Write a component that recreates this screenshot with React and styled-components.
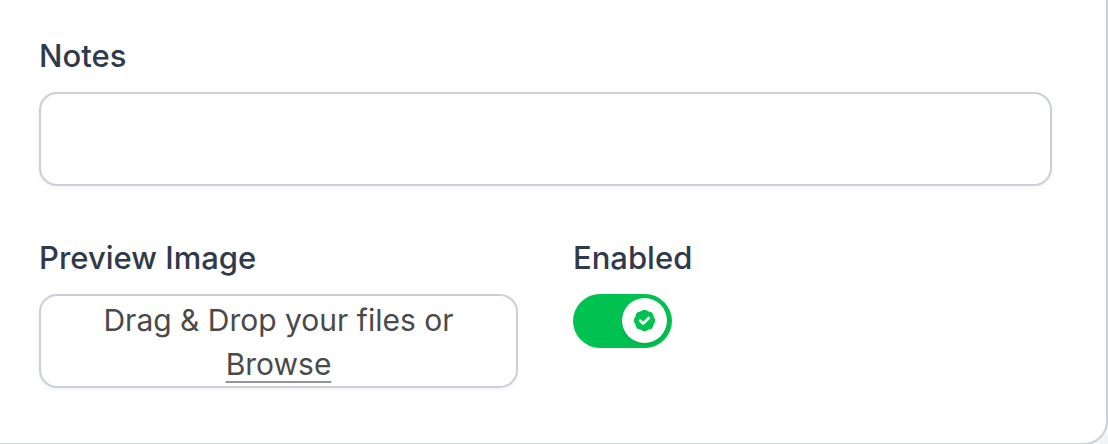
import React, { useState } from 'react'
import styled, { createGlobalStyle } from 'styled-components'

function CheckBadge()
{
    return (
        <svg width='27' height='27' viewBox='0 0 20 20' fill='currentColor' aria-hidden='true'>
            <circle cx='10' cy='10' r='7.4' />
            <path d='M16.403 12.652a3 3 0 0 0 0-5.304 3 3 0 0 0-3.75-3.751 3 3 0 0 0-5.305 0 3 3 0 0 0-3.751 3.75 3 3 0 0 0 0 5.305 3 3 0 0 0 3.75 3.751 3 3 0 0 0 5.305 0 3 3 0 0 0 3.751-3.75Z' />
            <path d='M6.8 10.2 9 12.2 13.2 8.1' fill='none' stroke='#ffffff' strokeWidth='2' strokeLinecap='round' strokeLinejoin='round' />
        </svg>
    )
}

function App()
{
    const [notes, setNotes] = useState('')
    const [enabled, setEnabled] = useState(true)

    return (
        <>
            <GlobalStyle />
            <Card>
                <Field>
                    <Label htmlFor='notes'>Notes</Label>
                    <TextArea id='notes' rows={2} value={notes} onChange={(e) => setNotes(e.target.value)} />
                </Field>
                <Columns>
                    <Field>
                        <Label htmlFor='preview'>Preview Image</Label>
                        <FileInput id='preview' type='file' accept='image/*' />
                        <DropZone htmlFor='preview'>
                            Drag &amp; Drop your files or <Browse>Browse</Browse>
                        </DropZone>
                    </Field>
                    <Field>
                        <Label htmlFor='enabled'>Enabled</Label>
                        <Toggle>
                            <Track
                                id='enabled'
                                type='checkbox'
                                role='switch'
                                checked={enabled}
                                onChange={(e) => setEnabled(e.target.checked)}
                            />
                            <Thumb $on={enabled}>
                                {enabled && <CheckBadge />}
                            </Thumb>
                        </Toggle>
                    </Field>
                </Columns>
            </Card>
        </>
    )
}

export default App

const GlobalStyle = createGlobalStyle`
    * {
        box-sizing: border-box;
    }

    body {
        margin: 0;
        overflow: hidden;
        background: #f3f4f6;
        font-family: Inter, 'Liberation Sans', sans-serif;
    }
`

const Card = styled.form`
    display: flex;
    flex-direction: column;
    gap: 48px;
    padding: 32px 54px 55px 39px;
    background: #ffffff;
    border: solid #cbd0d7;
    border-width: 0 2px 2px 0;
    border-bottom-right-radius: 24px;
`

const Columns = styled.div`
    display: grid;
    grid-template-columns: 1fr 1fr;
    gap: 55px;
`

const Field = styled.div`
    display: flex;
    flex-direction: column;
    align-items: flex-start;
    gap: 12px;
    position: relative;
`

const Label = styled.label`
    color: #2f3a4a;
    font-size: 31px;
    font-weight: 500;
    line-height: 48px;
`

const TextArea = styled.textarea`
    display: block;
    width: 100%;
    height: 94px;
    padding: 8px 24px;
    border: 2px solid #cbd0d7;
    border-radius: 18px;
    background: #ffffff;
    box-shadow: 0 2px 4px rgba(0, 0, 0, 0.05);
    color: #2f3a4a;
    font: inherit;
    font-size: 30px;
    resize: none;
    outline: none;
`

/* the drop zone is its visible face */
const FileInput = styled.input`
    position: absolute;
    width: 1px;
    height: 1px;
    opacity: 0;
`

const DropZone = styled.label`
    width: 100%;
    padding: 2px 32px 0;
    border: 2px solid #cbd0d7;
    border-radius: 18px;
    box-shadow: 0 2px 4px rgba(0, 0, 0, 0.05);
    color: #4a4a4a;
    font-size: 30px;
    line-height: 44px;
    text-align: center;
    cursor: pointer;
`

const Browse = styled.span`
    text-decoration: underline 2px #969696;
    text-underline-offset: 6px;
`

const Toggle = styled.div`
    display: grid;
    width: 99px;
    height: 54px;
`

const Track = styled.input`
    appearance: none;
    grid-area: 1 / 1;
    width: 100%;
    height: 100%;
    margin: 0;
    border-radius: 27px;
    background: #e5e7eb;
    cursor: pointer;

    &:checked {
        background: #00c250;
    }
`

const Thumb = styled.span`
    grid-area: 1 / 1;
    justify-self: ${({ $on }) => $on ? 'end' : 'start'};
    display: grid;
    place-items: center;
    width: 45px;
    height: 45px;
    margin: 4px 5px;
    border-radius: 50%;
    background: #ffffff;
    box-shadow: 0 2px 4px rgba(0, 0, 0, 0.1);
    color: #00c250;
    pointer-events: none;
    z-index: 1;
`
